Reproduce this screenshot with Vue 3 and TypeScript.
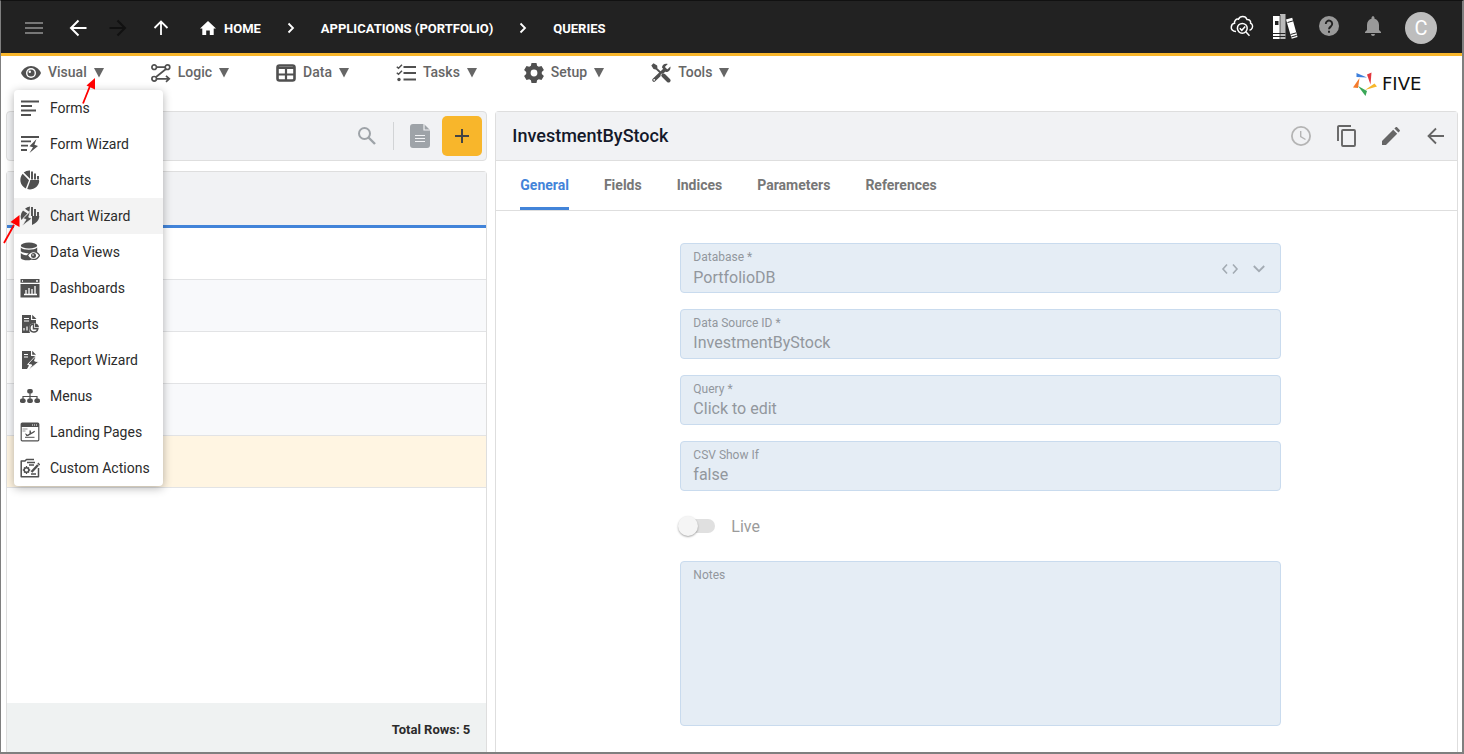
<script setup lang="ts">
import { ref } from 'vue'

interface MenuItem {
  label: string
  icon: string
}

const mainMenus: MenuItem[] = [
  {
    label: 'Visual',
    icon: '<path fill="currentColor" d="M10 3C5.500 3 1.700 5.900 0 10c1.700 4.100 5.500 7 10 7s8.300-2.900 10-7c-1.700-4.100-5.500-7-10-7z"/><circle cx="10" cy="10" r="5" fill="#fff"/><circle cx="10" cy="10" r="3.600" fill="currentColor"/><circle cx="8.800" cy="8.800" r="1.200" fill="#fff"/>'
  },
  {
    label: 'Logic',
    icon: '<g fill="none" stroke="currentColor" stroke-width="1.700"><circle cx="3.200" cy="4.200" r="2.300"/><circle cx="16.500" cy="4.200" r="2.300"/><circle cx="3.200" cy="15.800" r="2.300"/><path d="M5.500 4.200h8.700M15 6L5 14M5.500 15.800H18M15 12.800l3.300 3-3.300 3"/></g>'
  },
  {
    label: 'Data',
    icon: '<rect x="1.500" y="2.500" width="17" height="15" rx="2" fill="none" stroke="currentColor" stroke-width="2.600"/><path d="M1 5h18M1 11.500h18M10 5v12" stroke="currentColor" stroke-width="2.200" fill="none"/>'
  },
  {
    label: 'Tasks',
    icon: '<path d="M7.500 4H20M7.500 10H20M7.500 16.500H20" stroke="currentColor" stroke-width="2"/><path d="M.8 3.800l1.700 1.500L6 1.800M.8 9.800l1.700 1.500L6 7.800" stroke="currentColor" stroke-width="1.500" fill="none"/><circle cx="3" cy="16.500" r="1.700" fill="currentColor"/>'
  },
  {
    label: 'Setup',
    icon: '<path fill="currentColor" fill-rule="evenodd" d="M7.500 0h5l.6 2.800 1.700 1 2.700-.9 2.400 4.200-2.100 1.900v2l2.100 1.900-2.400 4.200-2.700-.9-1.700 1-.6 2.800h-5l-.6-2.800-1.700-1-2.700.9L.1 12.900 2.200 11V9L.1 7.100l2.400-4.200 2.700.9 1.700-1zM10 6.600a3.400 3.400 0 1 0 0 6.800 3.400 3.400 0 0 0 0-6.800z"/>'
  },
  {
    label: 'Tools',
    icon: '<path d="M3 17L14 6.500" stroke="currentColor" stroke-width="3.600" stroke-linecap="round"/><path fill="currentColor" d="M11 4.500C11 1.500 14 0 16.800.9L14 3.700l.5 2 2 .5 2.900-2.700C20 6.500 18 9.300 14.800 9z"/><path d="M2 2.500L10 10" stroke="currentColor" stroke-width="1.800"/><path fill="currentColor" d="M.3 2.500L2.500.3l3.600 2.200.4 2L4.500 6.500l-2-.4z"/><path d="M12.500 12.500l5 5" stroke="currentColor" stroke-width="4" stroke-linecap="round"/><path d="M9.500 12.500l1.500-2" stroke="#fff" stroke-width=".8"/><circle cx="3.200" cy="16.800" r=".9" fill="#fff"/>'
  }
]

const visualItems: MenuItem[] = [
  { label: 'Forms', icon: '<path d="M1 3.500h18M1 8h11M1 12.500h15M1 17h10" stroke="currentColor" stroke-width="1.800"/>' },
  {
    label: 'Form Wizard',
    icon: '<path d="M1 3h18M1 7.300h10M1 11.700h7M1 16h6" stroke="currentColor" stroke-width="1.800"/><path fill="currentColor" d="M16.500 5l-7 7.200 3.500 1L9.500 19l8.500-7-3.600-1.200z"/>'
  },
  {
    label: 'Charts',
    icon: '<path fill="currentColor" d="M10 8.800L3.700 2.600A9.300 9.300 0 0 1 10 .6zM2.700 3.800L9 10.200 5.800 18.400A9.300 9.300 0 0 1 2.700 3.800zM10.200 10.800h9.100A9.300 9.300 0 0 1 7.200 19z"/><path d="M12 1.500v8M15 3.500v6M18 6v3.500" stroke="currentColor" stroke-width="1.900"/><path d="M10.200 10h8.800v2h-8.800z" fill="currentColor"/>'
  },
  {
    label: 'Chart Wizard',
    icon: '<path fill="currentColor" d="M9.500 6L5 2.800A9 9 0 0 1 10 .6zM3 4.500L7.500 7.500 1.500 14A9 9 0 0 1 3 4.500zM12 10h7.300c0 4-3.300 7.500-7.300 9z"/><path d="M12 1v9M15 3v8M18 6v5" stroke="currentColor" stroke-width="1.900"/><path fill="currentColor" stroke="#f3f3f3" stroke-width=".8" d="M10.500 5L3 12.500l3 1-4 6.500 10-7.500-3.300-1.300z"/>'
  },
  {
    label: 'Data Views',
    icon: '<ellipse cx="9" cy="3.500" rx="8.200" ry="3" fill="currentColor"/><path fill="currentColor" d="M.8 5.500c2 3 14 3 16.400 0v4.200c-3 2.500-14 2-16.400-.5zM.8 11c1.500 2 5 2.500 7.500 2.300l3 4.500c-4 1-9 .5-10.500-1.500z"/><path fill="#fff" stroke="currentColor" stroke-width="1.300" d="M7.500 13.500c3-5.300 9-5.300 12 0-3 5.300-9 5.300-12 0z"/><circle cx="13.500" cy="13.500" r="2.500" fill="currentColor"/><circle cx="13" cy="13" r=".8" fill="#fff"/>'
  },
  {
    label: 'Dashboards',
    icon: '<path fill="currentColor" d="M.5 1h19v3.700H.5zM.5 6h19v13.500H.5z"/><path d="M2 3h1M16 3h2M4 16.500h13M6 16v-4M9 16v-6M12 16v-5M15 16V8" stroke="#fff" stroke-width="1.300"/>'
  },
  {
    label: 'Reports',
    icon: '<path fill="currentColor" d="M2 1h9v5h5v4c-5 0-8 4-6 9H2z"/><path fill="currentColor" d="M12.200.8L16.500 5h-4.300z"/><path d="M4 4.500h5M4 7h5M4 16.500V14M7 16.500v-4" stroke="#fff" stroke-width="1.200"/><circle cx="14" cy="14" r="4.800" fill="#fff"/><path d="M13.500 10a4 4 0 1 0 4.300 4.800h-4.300z" fill="none" stroke="currentColor" stroke-width="1.500"/><path fill="currentColor" d="M15 9.300a4.500 4.500 0 0 1 4 4h-4z"/>'
  },
  {
    label: 'Report Wizard',
    icon: '<path fill="currentColor" d="M2 1h9v5h4v2l-8 6.500 2 1L7 19H2z"/><path fill="currentColor" d="M12.200.8L16 4.800h-3.800z"/><path d="M4 4.500h4M4 7h4" stroke="#fff" stroke-width="1.200"/><path fill="currentColor" stroke="#fff" stroke-width=".8" d="M16 5.500L8 14l4 1-3.500 5 10-8-4-1z"/>'
  },
  {
    label: 'Menus',
    icon: '<path d="M10 5v11M3 14v-3.500h14V14" stroke="currentColor" stroke-width="1.200" fill="none"/><rect x="7.200" y="3" width="5.600" height="4.500" rx="1.800" fill="currentColor"/><rect x="0" y="12.500" width="5.600" height="4.500" rx="1.800" fill="currentColor"/><rect x="7.200" y="12.500" width="5.600" height="4.500" rx="1.800" fill="currentColor"/><rect x="14.400" y="12.500" width="5.600" height="4.500" rx="1.800" fill="currentColor"/>'
  },
  {
    label: 'Landing Pages',
    icon: '<rect x="1.200" y="1.200" width="17.600" height="17.600" rx="1" fill="none" stroke="currentColor" stroke-width="1.200"/><path fill="currentColor" d="M1 1h18v4H1z"/><path d="M12 3h1M14 3h1M16 3h1" stroke="#fff" stroke-width="1"/><path d="M2.500 7h5M2.500 9h3" stroke="currentColor" stroke-width="1" opacity=".6"/><path d="M5 15.300h9.500" stroke="currentColor" stroke-width="1"/><path fill="currentColor" d="M5 11.500l1.200.2 1.300 1 2-1.200V8.500l1-.3.8 2.500 3-2 .8.500-1 1.300-6 3.500-1.600.3z"/>'
  },
  {
    label: 'Custom Actions',
    icon: '<path d="M14 1.500H6.500L5 3H1.200v15.800h17.300V10" fill="none" stroke="currentColor" stroke-width="1.500" stroke-linejoin="round"/><path d="M7 4.500h8M9 7h5M11 16h5" stroke="currentColor" stroke-width="1.400"/><path d="M6.500 8v8M2.800 12h7.400M4 9.500l5 5M9 9.500l-5 5" stroke="currentColor" stroke-width="1.300"/><circle cx="6.500" cy="12" r="2.300" fill="#fff" stroke="currentColor" stroke-width="1.500"/><path d="M11.500 14l6.500-7" stroke="currentColor" stroke-width="2.400"/><path d="M18.300 6.500l1-1" stroke="currentColor" stroke-width="2.600"/>'
  }
]

const highlighted = ref('Chart Wizard')
const tabs = ['General', 'Fields', 'Indices', 'Parameters', 'References']
const activeTab = ref('General')
const rowCount = 5
const selectedRow = 5

const database = ref('PortfolioDB')
const dataSourceId = ref('InvestmentByStock')
const query = ref('Click to edit')
const csvShowIf = ref('false')
const live = ref(false)
const notes = ref('')
</script>

<template>
  <div class="shell">
    <header class="topbar">
      <nav class="history" aria-label="History">
        <button class="plain dim" aria-label="Menu">
          <svg width="20" height="20" viewBox="0 0 20 20"><path d="M1 5h18M1 10h18M1 15h18" stroke="currentColor" stroke-width="2" /></svg>
        </button>
        <button class="plain" aria-label="Back">
          <svg width="20" height="20" viewBox="0 0 20 20"><path d="M18.500 10h-15M10.500 2.500L3 10l7.500 7.500" fill="none" stroke="currentColor" stroke-width="2" /></svg>
        </button>
        <button class="plain faint" aria-label="Forward">
          <svg width="20" height="20" viewBox="0 0 20 20"><path d="M1.500 10h15M9.500 2.500L17 10l-7.500 7.500" fill="none" stroke="currentColor" stroke-width="2" /></svg>
        </button>
        <button class="plain" aria-label="Up">
          <svg width="20" height="20" viewBox="0 0 20 20"><path d="M10 17V4M3.500 10L10 3.500l6.500 6.500" fill="none" stroke="currentColor" stroke-width="1.800" /></svg>
        </button>
      </nav>
      <nav class="crumbs" aria-label="Breadcrumb">
        <a href="#" class="crumb">
          <svg width="16" height="16" viewBox="0 0 16 16"><path fill="currentColor" d="M8 1l8 7.500h-2.300V15H9.800v-4.500H6.200V15H2.300V8.500H0z" /></svg>
          HOME
        </a>
        <svg width="8" height="12" viewBox="0 0 8 12"><path d="M1.500 1.500L6 6l-4.500 4.500" fill="none" stroke="currentColor" stroke-width="1.800" /></svg>
        <a href="#" class="crumb">APPLICATIONS (PORTFOLIO)</a>
        <svg width="8" height="12" viewBox="0 0 8 12"><path d="M1.500 1.500L6 6l-4.500 4.500" fill="none" stroke="currentColor" stroke-width="1.800" /></svg>
        <a href="#" class="crumb">QUERIES</a>
      </nav>
      <div class="account">
        <button class="plain" aria-label="Inspect">
          <svg width="24" height="24" viewBox="0 0 24 24"><g fill="none" stroke="currentColor" stroke-width="1.500"><path d="M6 17.500C2.500 17.500 1 15 1.300 12.800 1.600 10.500 3 9.500 4.500 9.300 4 7 6 4.600 8.500 5.200 10 1.800 15.500 1.600 17 5.500c2.500-.2 4 1.600 3.600 3.800 1.800.8 2.300 3 1.600 4.700-.5 1.200-1.300 2-2.700 2.300" /><circle cx="12.300" cy="14.300" r="4.900" /><path d="M9.800 14.300l2 2 3.400-3.800M15.800 17.800l3.700 4" /></g></svg>
        </button>
        <button class="plain" aria-label="Library">
          <svg width="26" height="26" viewBox="0 0 26 26"><path fill="currentColor" d="M1 3h7v23H1zM14 6.500l6.200-1.800L25.500 24l-5.800 1.800z" /><path fill="#bbb" d="M8 1h5.500v25H8z" /><path d="M1 20.500h12.500M1 23.500h12.500" stroke="#222" stroke-width="1.200" /><path d="M8 2v24" stroke="#222" stroke-width=".7" /><path fill="#222" d="M3 8h3.500v4H3z" /><path d="M15.500 9.500l5.500-1.600M18.500 21.500l5.500-1.600M19.200 24l5.500-1.600" stroke="#222" stroke-width="1" /></svg>
        </button>
        <button class="plain grey" aria-label="Help">
          <svg width="20" height="20" viewBox="0 0 20 20"><circle cx="10" cy="10" r="10" fill="currentColor" /><path d="M6.800 8a3.200 3.200 0 1 1 5.200 2.300c-1.300 1-2 1.500-2 3" fill="none" stroke="#222" stroke-width="1.900" /><path d="M9 14.700h2v2H9z" fill="#222" /></svg>
        </button>
        <button class="plain grey" aria-label="Notifications">
          <svg width="16" height="20" viewBox="0 0 16 20"><path fill="currentColor" d="M8 20a2 2 0 0 0 2-1.900H6A2 2 0 0 0 8 20zM14 14V9c0-3.200-1.700-5.600-4.500-6.300V1.900C9.500.9 8.800.3 8 .3s-1.500.6-1.500 1.600v.8C3.700 3.400 2 5.800 2 9v5l-2 2v1h16v-1z" /></svg>
        </button>
        <button class="avatar">C</button>
      </div>
    </header>

    <div class="menubar">
      <nav class="menus" aria-label="Main menu">
        <div v-for="menu in mainMenus" :key="menu.label" class="menu">
          <button class="menu-button">
            <svg width="20" height="20" viewBox="0 0 20 20" v-html="menu.icon"></svg>
            <span>{{ menu.label }}</span>
            <svg class="caret" width="10" height="10" viewBox="0 0 10 10"><path d="M0 0h10L5 9.500z" fill="currentColor" /></svg>
          </button>
          <div v-if="menu.label === 'Visual'" class="dropdown">
            <button
              v-for="item in visualItems"
              :key="item.label"
              class="dropdown-item"
              :class="{ highlighted: item.label === highlighted }"
              @mouseenter="highlighted = item.label"
            >
              <svg width="20" height="20" viewBox="0 0 20 20" v-html="item.icon"></svg>
              {{ item.label }}
            </button>
          </div>
        </div>
      </nav>
      <a href="#" class="brand">
        <svg width="24" height="24" viewBox="0 0 24 24">
          <path fill="#3d7fdb" d="M3.500 1L14 5.500 3.500 5z" />
          <path fill="#e2383f" d="M14 2.500L18.500.5 17.500 12.500z" />
          <path fill="#f6b62b" d="M21.500 11.500L24 14.500 12 18z" />
          <path fill="#3aa757" d="M5 14l9 5-1.500 5z" />
          <path fill="#f47b2c" d="M6.500 6L0 15.500l5 .5z" />
        </svg>
        <span>FIVE</span>
      </a>
    </div>

    <main class="workspace">
      <section class="list">
        <div class="list-tools">
          <button class="plain" aria-label="Search">
            <svg width="20" height="20" viewBox="0 0 20 20"><circle cx="7.500" cy="7.500" r="5.500" fill="none" stroke="currentColor" stroke-width="2" /><path d="M11.500 11.500l6.500 6.500" stroke="currentColor" stroke-width="2.400" /></svg>
          </button>
          <span class="divider"></span>
          <button class="plain" aria-label="Document">
            <svg width="20" height="24" viewBox="0 0 20 24"><path fill="currentColor" d="M3 0h11l6 6v15a3 3 0 0 1-3 3H3a3 3 0 0 1-3-3V3a3 3 0 0 1 3-3z" /><path d="M14 0v6h6" fill="none" stroke="#f1f2f4" stroke-width="1.200" /><path d="M5 11.500h10M5 14.500h10M5 17.500h10" stroke="#f1f2f4" stroke-width="1.200" /></svg>
          </button>
          <button class="add" aria-label="Add">
            <svg width="14" height="14" viewBox="0 0 14 14"><path d="M7 0v14M0 7h14" stroke="currentColor" stroke-width="2" /></svg>
          </button>
        </div>
        <div class="grid-box">
          <table class="rows">
            <thead>
              <tr><th></th></tr>
            </thead>
            <tbody>
              <tr v-for="n in rowCount" :key="n" :class="{ selected: n === selectedRow }"><td></td></tr>
            </tbody>
          </table>
          <footer class="total">Total Rows: {{ rowCount }}</footer>
        </div>
      </section>

      <section class="detail">
        <div class="detail-head">
          <h1>InvestmentByStock</h1>
          <div class="detail-tools">
            <button class="plain muted" aria-label="History">
              <svg width="20" height="20" viewBox="0 0 20 20"><circle cx="10" cy="10" r="9.100" fill="none" stroke="currentColor" stroke-width="1.800" /><path d="M9.700 5v5.500l4.800 3" fill="none" stroke="currentColor" stroke-width="1.400" /></svg>
            </button>
            <button class="plain" aria-label="Copy">
              <svg width="20" height="22" viewBox="0 0 20 22"><path d="M2 16V2a1 1 0 0 1 1-1h12" fill="none" stroke="currentColor" stroke-width="1.900" /><rect x="6" y="5" width="13" height="16" rx="1" fill="none" stroke="currentColor" stroke-width="1.900" /></svg>
            </button>
            <button class="plain" aria-label="Edit">
              <svg width="20" height="20" viewBox="0 0 20 20"><path fill="currentColor" d="M1 19v-4L12.200 3.800l4 4L5 19zM13.400 2.600l1.300-1.300c.4-.4 1-.4 1.400 0l2.600 2.600c.4.4.4 1 0 1.400l-1.300 1.300z" /></svg>
            </button>
            <button class="plain" aria-label="Close">
              <svg width="20" height="20" viewBox="0 0 20 20"><path d="M18 10H3M10 2.500L2.500 10l7.500 7.500" fill="none" stroke="currentColor" stroke-width="1.800" /></svg>
            </button>
          </div>
        </div>
        <div class="tabs" role="tablist">
          <button
            v-for="tab in tabs"
            :key="tab"
            role="tab"
            class="tab"
            :class="{ active: tab === activeTab }"
            :aria-selected="tab === activeTab"
            @click="activeTab = tab"
          >{{ tab }}</button>
        </div>
        <form class="form" @submit.prevent>
          <div class="field with-tools">
            <div class="field-main">
              <label for="database">Database *</label>
              <select id="database" v-model="database" disabled>
                <option>PortfolioDB</option>
              </select>
            </div>
            <svg width="18" height="12" viewBox="0 0 18 12"><path d="M6 1.500L2 6l4 4.500M12 1.500L16 6l-4 4.500" fill="none" stroke="currentColor" stroke-width="1.600" /></svg>
            <svg width="12" height="8" viewBox="0 0 12 8"><path d="M.8 1L6 6.200 11.200 1" fill="none" stroke="currentColor" stroke-width="1.800" /></svg>
          </div>
          <div class="field">
            <label for="source">Data Source ID *</label>
            <input id="source" v-model="dataSourceId" type="text" disabled />
          </div>
          <div class="field">
            <label for="query">Query *</label>
            <input id="query" v-model="query" type="text" disabled />
          </div>
          <div class="field">
            <label for="csv">CSV Show If</label>
            <input id="csv" v-model="csvShowIf" type="text" disabled />
          </div>
          <label class="switch">
            <input v-model="live" type="checkbox" disabled />
            Live
          </label>
          <div class="field notes">
            <label for="notes">Notes</label>
            <textarea id="notes" v-model="notes" disabled></textarea>
          </div>
        </form>
      </section>
    </main>

    <svg class="pointer first" width="20" height="34" viewBox="0 0 20 34"><path d="M5 30.500L12 13" stroke="#f00" stroke-width="1.800" /><path d="M17 5v11.500l-8.500-4z" fill="#f00" /></svg>
    <svg class="pointer second" width="20" height="34" viewBox="0 0 20 34"><path d="M3 31L13 13" stroke="#f00" stroke-width="1.800" /><path d="M18.500 3v12l-9-5z" fill="#f00" /></svg>
  </div>
</template>

<style>
body {
  margin: 0;
  background: #fff;
}
</style>

<style scoped>
* {
  box-sizing: border-box;
}
.shell {
  position: relative;
  display: flex;
  flex-direction: column;
  min-height: 100vh;
  border: 1px solid #7f7f7f;
  border-top-color: #111;
  border-right-width: 2px;
  border-bottom-width: 2px;
  font-family: Roboto, "Liberation Sans", sans-serif;
  font-size: 14px;
  color: #2b2b2b;
}
button,
input,
select,
textarea {
  font: inherit;
  color: inherit;
  background: none;
  border: 0;
  margin: 0;
  padding: 0;
}
svg {
  display: block;
  flex: none;
}
.plain {
  display: flex;
  align-items: center;
}
.topbar {
  display: flex;
  align-items: center;
  height: 55px;
  padding: 2px 25px 0 23px;
  background: #222;
  border-bottom: 3px solid #f8b62b;
  color: #fff;
}
.history {
  display: flex;
  align-items: center;
  gap: 23px;
}
.history .dim {
  margin-right: 1px;
}
.history .faint {
  margin-left: -3px;
}
.dim {
  color: #777;
}
.faint {
  color: #111;
}
.crumbs {
  display: flex;
  align-items: center;
  gap: 26px;
  margin-left: 29px;
}
.crumb {
  display: flex;
  align-items: center;
  gap: 8px;
  color: #fff;
  font-size: 13px;
  font-weight: 700;
  text-decoration: none;
}
.account {
  display: flex;
  align-items: center;
  gap: 24px;
  margin-left: auto;
}
.account .plain {
  padding-bottom: 4px;
}
.account .plain + .plain {
  margin-left: -6px;
}
.account .plain.grey {
  margin-left: -3px;
}
.account .plain.grey + .grey {
  margin-left: 2px;
}
.grey {
  color: #999;
}
.avatar {
  width: 32px;
  height: 32px;
  border-radius: 50%;
  background: #bdbdbd;
  font-size: 20px;
  line-height: 32px;
}
.menubar {
  display: flex;
  justify-content: space-between;
  align-items: flex-start;
  height: 55px;
  padding: 0 20px;
}
.menus {
  display: flex;
  gap: 47px;
}
.menu {
  position: relative;
}
.menu-button {
  display: flex;
  align-items: center;
  gap: 7px;
  height: 34px;
  color: #505050;
  font-weight: 500;
}
.menu-button span {
  padding-bottom: 2px;
  color: #666;
}
.caret {
  color: #666;
}
.dropdown {
  position: absolute;
  z-index: 2;
  top: 34px;
  left: -7px;
  background: #fff;
  border-radius: 4px;
  box-shadow: 0 2px 10px rgba(0, 0, 0, 0.3);
}
.dropdown-item {
  display: flex;
  align-items: center;
  gap: 10px;
  width: 100%;
  height: 36px;
  padding: 0 13px 0 6px;
  white-space: nowrap;
}
.dropdown-item svg {
  color: #505050;
}
.highlighted {
  background: #f3f3f3;
}
.brand {
  display: flex;
  align-items: center;
  gap: 5px;
  margin-top: 16px;
  color: #111;
  font-family: "DejaVu Sans", sans-serif;
  font-size: 18px;
  line-height: 24px;
  text-decoration: none;
}
.brand span {
  min-width: 60px;
}
.workspace {
  flex: 1;
  display: grid;
  grid-template-columns: 1fr 2fr;
  gap: 8px;
  padding: 0 4px 0 5px;
}
.list {
  display: flex;
  flex-direction: column;
  gap: 10px;
}
.list-tools {
  display: flex;
  align-items: center;
  justify-content: flex-end;
  gap: 16px;
  height: 50px;
  padding-right: 4px;
  background: #f1f2f4;
  border: 1px solid #dedede;
  border-radius: 4px;
  color: #9ea3a8;
}
.divider {
  width: 1px;
  height: 28px;
  background: #d2d4d6;
}
.add {
  display: flex;
  align-items: center;
  justify-content: center;
  width: 40px;
  height: 40px;
  margin-left: -4px;
  border-radius: 5px;
  background: #f8b62b;
  color: #444;
}
.grid-box {
  flex: 1;
  display: flex;
  flex-direction: column;
  border: 1px solid #dedede;
  border-bottom: 0;
  border-radius: 4px 4px 0 0;
}
.rows {
  width: 100%;
  border-spacing: 0;
}
.rows th {
  height: 56px;
  padding: 0;
  background: #f1f2f4;
  border-bottom: 3px solid #4284d9;
}
.rows td {
  height: 52px;
  padding: 0;
  border-bottom: 1px solid #e2e3e5;
}
.rows tbody tr:nth-child(even) {
  background: #f8f9fb;
}
.rows .selected {
  background: #fff5e2;
}
.total {
  display: flex;
  align-items: center;
  justify-content: flex-end;
  height: 49px;
  margin-top: auto;
  padding: 4px 16px 0;
  background: #eff2f2;
  font-size: 13px;
  font-weight: 700;
}
.detail {
  border: 1px solid #dedede;
  border-bottom: 0;
  border-radius: 4px 4px 0 0;
}
.detail-head {
  display: flex;
  align-items: center;
  justify-content: space-between;
  height: 49px;
  padding: 0 11px 0 16px;
  background: #f1f2f4;
  border-bottom: 1px solid #dedede;
}
h1 {
  margin: 0;
  padding-bottom: 2px;
  font-size: 18px;
  font-weight: 500;
  color: #14192a;
}
.detail-tools {
  display: flex;
  align-items: center;
  gap: 25px;
  color: #666;
}
.muted {
  color: #b4b4b4;
}
.tabs {
  display: flex;
  gap: 35px;
  height: 50px;
  padding: 0 24px;
  border-bottom: 1px solid #dedede;
}
.tab {
  padding-top: 2px;
  border-bottom: 3px solid transparent;
  border-radius: 2px 2px 0 0;
  color: #777;
  font-weight: 700;
}
.tab.active {
  color: #4284d9;
  border-bottom-color: #4284d9;
}
.form {
  display: flex;
  flex-direction: column;
  gap: 16px;
  padding: 32px 176px 26px 184px;
}
.field {
  display: flex;
  flex-direction: column;
  height: 50px;
  padding: 5px 12px 0;
  background: #e5edf5;
  border: 1px solid #c9dbee;
  border-radius: 4px;
  color: #92979d;
}
.field label {
  display: block;
  font-size: 12px;
  line-height: 16px;
}
.field input,
.field select,
.field textarea {
  display: block;
  width: 100%;
  height: 24px;
  appearance: none;
  opacity: 1;
  font-size: 16px;
  line-height: 24px;
  color: #92979d;
}
.field select {
  height: 26px;
}
.with-tools {
  flex-direction: row;
  gap: 14px;
  padding-right: 15px;
}
.field-main {
  flex: 1;
}
.with-tools svg {
  margin-top: 14px;
  color: #a3abb3;
}
.with-tools svg:last-child {
  margin-top: 16px;
}
.switch {
  display: flex;
  align-items: center;
  gap: 16px;
  height: 38px;
  color: #9b9b9b;
  font-size: 16px;
}
.switch input {
  position: relative;
  width: 35px;
  height: 14px;
  border-radius: 7px;
  background: #e0e0e0;
  appearance: none;
}
.switch input::before {
  content: "";
  position: absolute;
  top: -3px;
  left: -2px;
  width: 20px;
  height: 20px;
  border-radius: 50%;
  background: #f5f5f5;
  box-shadow: 0 1px 2px rgba(0, 0, 0, 0.35);
}
.notes {
  height: 165px;
}
.notes textarea {
  flex: 1;
  resize: none;
}
.pointer {
  position: absolute;
  z-index: 3;
}
.first {
  top: 72px;
  left: 77px;
}
.second {
  top: 211px;
  left: 0;
}
</style>
